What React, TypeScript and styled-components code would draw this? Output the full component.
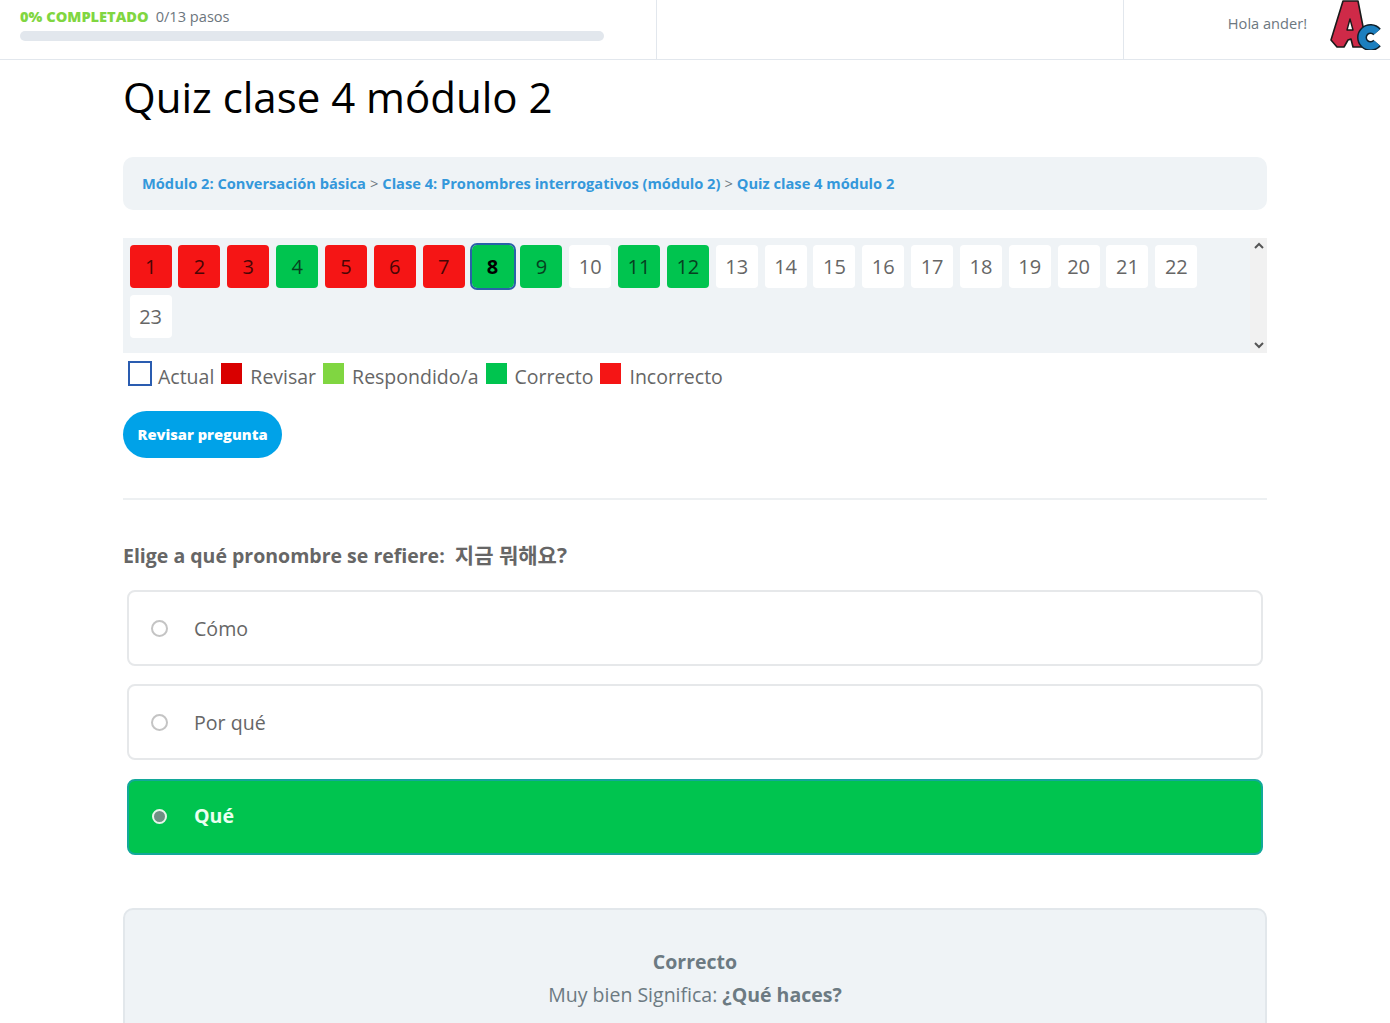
import React from "react";
import styled, { createGlobalStyle } from "styled-components";

const Global = createGlobalStyle`
  html, body { margin: 0; padding: 0; height: 1023px; overflow: hidden; background: #fff; }
  body { font-family: "Open Sans", "Noto Sans CJK KR", sans-serif; color: #666; }
  * { box-sizing: border-box; }
`;

const Header = styled.header`
  display: flex;
  height: 60px;
  border-bottom: 1px solid #e2e7ed;
`;
const ProgressCell = styled.div`
  width: 657px;
  padding: 7px 52px 0 20px;
  border-right: 1px solid #e2e7ed;
`;
const ProgressLabel = styled.div`
  display: flex;
  align-items: baseline;
  gap: 7px;
  height: 24px;
  font-size: 14.6px;
  line-height: 19px;
  color: #6c757d;
`;
const ProgressPercent = styled.strong`
  font-weight: 800;
  color: #80d641;
`;
const ProgressTrack = styled.div`
  height: 10px;
  border-radius: 5px;
  background: #e2e7ed;
`;
const MiddleCell = styled.div`
  width: 467px;
  border-right: 1px solid #e2e7ed;
`;
const UserCell = styled.div`
  flex: 1;
  display: flex;
  align-items: center;
  justify-content: flex-end;
  padding: 0 8px 9px 0;
  gap: 23px;
`;
const Greeting = styled.span`
  margin-bottom: 4px;
  font-size: 14.6px;
  color: #6c7780;
`;
const LogoSvg = styled.svg`
  flex: none;
`;
const Main = styled.main`
  width: 1144px;
  margin-left: 123px;
`;
const Title = styled.h1`
  margin: 0;
  padding-top: 6px;
  height: 97px;
  font-size: 42px;
  line-height: 62px;
  font-weight: 400;
  color: #000;
`;
const Breadcrumb = styled.nav`
  height: 53px;
  display: flex;
  align-items: center;
  padding: 0 0 1px 19px;
  gap: 4px;
  border-radius: 10px;
  background: #eff3f6;
  font-size: 14.65px;
  color: #6c7780;
`;
const Crumb = styled.a`
  font-weight: 700;
  color: #3498db;
`;
const QuizNav = styled.div`
  display: flex;
  height: 115px;
  margin-top: 28px;
  background: #eff3f6;
`;
const NavGrid = styled.div`
  flex: 1;
  display: flex;
  flex-wrap: wrap;
  align-content: flex-start;
  gap: 7px 6.85px;
  padding: 7px 13px 0 6.6px;
`;
const colors = { none: "#fff", wrong: "#f51515", right: "#00c44f" } as const;
const digitColors = { none: "#666", wrong: "#4a0505", right: "#064020" } as const;
const NavItem = styled.div<{ $state: keyof typeof colors; $current?: boolean }>`
  width: 42px;
  height: 43px;
  display: flex;
  align-items: center;
  justify-content: center;
  border-radius: ${(p) => (p.$current ? "5px" : "4px")};
  background: ${(p) => colors[p.$state]};
  font-size: 20px;
  font-weight: ${(p) => (p.$current ? 700 : 400)};
  color: ${(p) => (p.$current ? "#000" : digitColors[p.$state])};
  outline: ${(p) => (p.$current ? "2px solid #2a62a8" : "none")};
`;
const Scrollbar = styled.div`
  width: 17px;
  display: flex;
  flex-direction: column;
  align-items: center;
  justify-content: space-between;
  padding: 4px 0;
  background: #f1f1f1;
  color: #555;
`;
const Legend = styled.div`
  display: flex;
  align-items: flex-start;
  height: 58px;
  padding: 8px 0 0 5px;
  font-size: 19.5px;
  line-height: 32px;
  color: #666;
`;
const Swatch = styled.span<{ $color: string; $outline?: boolean }>`
  width: ${(p) => (p.$outline ? "24px" : "21px")};
  height: ${(p) => (p.$outline ? "25px" : "21px")};
  margin: ${(p) => (p.$outline ? "0 6px 0 0" : "2px 8px 0 7px")};
  background: ${(p) => (p.$outline ? "#fff" : p.$color)};
  border: ${(p) => (p.$outline ? `2px solid ${p.$color}` : "none")};
`;
const ReviewButton = styled.button`
  display: block;
  width: 159px;
  height: 47px;
  padding: 0 0 2px;
  border: none;
  border-radius: 24px;
  background: #00a2e8;
  color: #fff;
  font-family: inherit;
  font-size: 14.7px;
  font-weight: 800;
`;
const Divider = styled.hr`
  margin: 40px 0 0;
  border: none;
  border-top: 2px solid #edf0f2;
`;
const Question = styled.p`
  margin: 40px 0 0;
  height: 50px;
  font-size: 19.5px;
  line-height: 30px;
  font-weight: 700;
  color: #666;
`;
const Korean = styled.span`
  font-size: 21px;
  font-weight: 700;
`;
const Options = styled.div`
  display: flex;
  flex-direction: column;
  gap: 18.4px;
  margin: 0 4px;
`;
const Option = styled.div<{ $selected?: boolean }>`
  height: 76px;
  display: flex;
  align-items: center;
  padding: ${(p) => (p.$selected ? "0 0 2px 22px" : "0 0 0 22px")};
  gap: 26px;
  border: 2px solid ${(p) => (p.$selected ? "#12a89a" : "#e6e8ea")};
  border-radius: 8px;
  background: ${(p) => (p.$selected ? "#00c44f" : "#fff")};
  font-size: 19.6px;
  font-weight: ${(p) => (p.$selected ? 700 : 400)};
  color: ${(p) => (p.$selected ? "#eafff0" : "#666")};
`;
const Radio = styled.span<{ $selected?: boolean }>`
  width: ${(p) => (p.$selected ? "15px" : "17px")};
  height: ${(p) => (p.$selected ? "15px" : "17px")};
  margin: ${(p) => (p.$selected ? "2px 1px 0" : "0")};
  border-radius: 50%;
  border: 2px solid ${(p) => (p.$selected ? "#e6f5ea" : "#c4c4c4")};
  background: ${(p) => (p.$selected ? "#6f8f84" : "#fff")};
`;
const Feedback = styled.section`
  height: 200px;
  margin-top: 53px;
  padding-top: 35px;
  border: 2px solid #e2e7eb;
  border-radius: 10px;
  background: #eff3f6;
  text-align: center;
  font-size: 19.5px;
  line-height: 33px;
  color: #6c7a82;
`;
const FeedbackTitle = styled.div`
  font-weight: 700;
`;

const Logo = () => (
  <LogoSvg width="52" height="50" viewBox="0 0 52 50" aria-hidden="true">
    <path d="M13 1 L28 1 L37 47 L23 47 L21 39 L18 40 L14 47 L7 47 L1 40 Z" fill="#cf2a48" stroke="#1a1a1a" strokeWidth="1.6" strokeLinejoin="round" />
    <path d="M17 30 L20 19 L23 30 Z" fill="#fff" stroke="#1a1a1a" strokeWidth="1.4" strokeLinejoin="round" />
    <path d="M47 32 A8.5 8.5 0 1 0 47 43" fill="none" stroke="#10202a" strokeWidth="10" />
    <path d="M47 32 A8.5 8.5 0 1 0 47 43" fill="none" stroke="#1c7fbf" strokeWidth="7" />
  </LogoSvg>
);

const Chevron = ({ up }: { up?: boolean }) => (
  <svg width="10" height="8" viewBox="0 0 10 8" aria-hidden="true">
    <path d={up ? "M1 6 L5 2 L9 6" : "M1 2 L5 6 L9 2"} fill="none" stroke="currentColor" strokeWidth="2" />
  </svg>
);

const wrong = [1, 2, 3, 5, 6, 7];
const right = [4, 8, 9, 11, 12];
const numbers = Array.from({ length: 23 }, (_, i) => i + 1);

export default function App() {
  return (
    <>
      <Global />
      <Header>
        <ProgressCell>
          <ProgressLabel>
            <ProgressPercent>0% COMPLETADO</ProgressPercent>
            <span>0/13 pasos</span>
          </ProgressLabel>
          <ProgressTrack />
        </ProgressCell>
        <MiddleCell />
        <UserCell>
          <Greeting>Hola ander!</Greeting>
          <Logo />
        </UserCell>
      </Header>
      <Main>
        <Title>Quiz clase 4 módulo 2</Title>
        <Breadcrumb>
          <Crumb>Módulo 2: Conversación básica</Crumb>
          <span>&gt;</span>
          <Crumb>Clase 4: Pronombres interrogativos (módulo 2)</Crumb>
          <span>&gt;</span>
          <Crumb>Quiz clase 4 módulo 2</Crumb>
        </Breadcrumb>
        <QuizNav>
          <NavGrid>
            {numbers.map((n) => (
              <NavItem
                key={n}
                $state={wrong.includes(n) ? "wrong" : right.includes(n) ? "right" : "none"}
                $current={n === 8}
              >
                {n}
              </NavItem>
            ))}
          </NavGrid>
          <Scrollbar>
            <Chevron up />
            <Chevron />
          </Scrollbar>
        </QuizNav>
        <Legend>
          <Swatch $color="#2a5cb0" $outline />
          Actual
          <Swatch $color="#d90000" />
          Revisar
          <Swatch $color="#80d641" />
          Respondido/a
          <Swatch $color="#00c44f" />
          Correcto
          <Swatch $color="#f51515" />
          Incorrecto
        </Legend>
        <ReviewButton>Revisar pregunta</ReviewButton>
        <Divider />
        <Question>
          Elige a qué pronombre se refiere:&nbsp; <Korean>지금 뭐해요?</Korean>
        </Question>
        <Options>
          <Option>
            <Radio />
            Cómo
          </Option>
          <Option>
            <Radio />
            Por qué
          </Option>
          <Option $selected>
            <Radio $selected />
            Qué
          </Option>
        </Options>
        <Feedback>
          <FeedbackTitle>Correcto</FeedbackTitle>
          <div>
            Muy bien Significa: <strong>¿Qué haces?</strong>
          </div>
        </Feedback>
      </Main>
    </>
  );
}
